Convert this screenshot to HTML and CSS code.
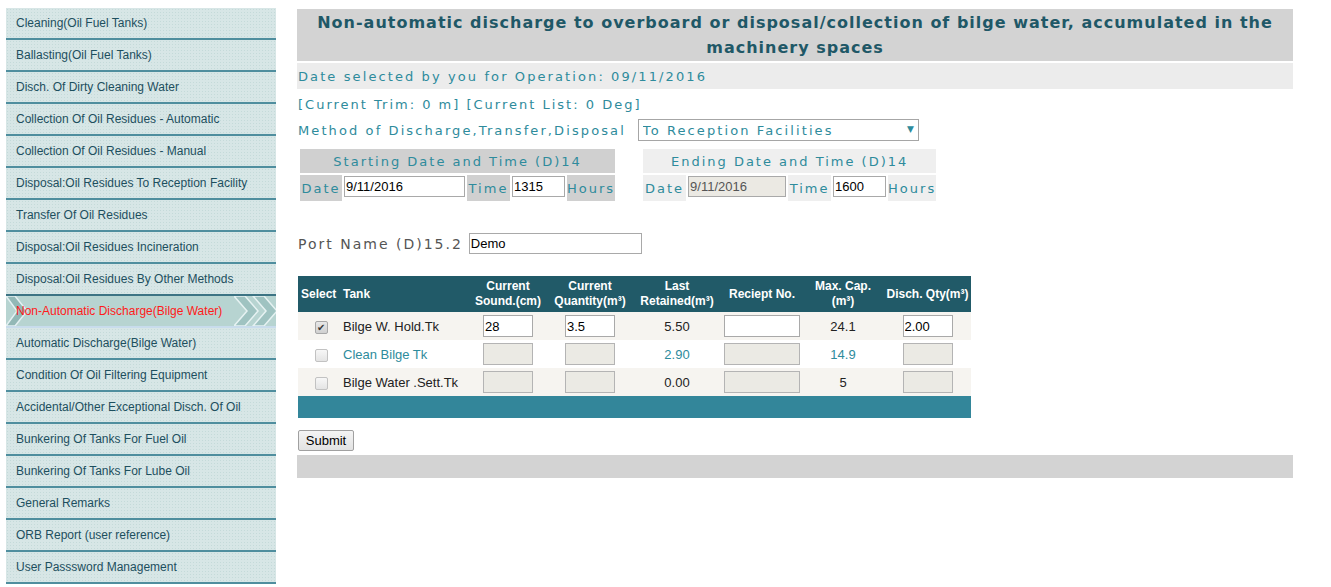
FILE: index.html
```html
<!DOCTYPE html>
<html>
<head>
<meta charset="utf-8">
<title>Non-automatic discharge</title>
<link rel="stylesheet" href="styles.css">
</head>
<body>
<div class="page">
  <nav class="sidebar">
    <a class="nav-item">Cleaning(Oil Fuel Tanks)</a>
    <a class="nav-item">Ballasting(Oil Fuel Tanks)</a>
    <a class="nav-item">Disch. Of Dirty Cleaning Water</a>
    <a class="nav-item">Collection Of Oil Residues - Automatic</a>
    <a class="nav-item">Collection Of Oil Residues - Manual</a>
    <a class="nav-item">Disposal:Oil Residues To Reception Facility</a>
    <a class="nav-item">Transfer Of Oil Residues</a>
    <a class="nav-item">Disposal:Oil Residues Incineration</a>
    <a class="nav-item pre-active">Disposal:Oil Residues By Other Methods</a>
    <a class="nav-item active">
      <svg class="chev chev-left" width="22" height="30" viewBox="0 0 22 30"><polygon points="0,0 9,0 21,15 9,30 0,30 11,15" fill="#92b8b6" stroke="#e4f0f2" stroke-width="1.5"/></svg>
      <span class="nav-label">Non-Automatic Discharge(Bilge Water)</span>
      <svg class="chev chev-right" width="42" height="30" viewBox="0 0 42 30"><polygon points="0,0 11,0 24,15 11,30 0,30 13,15" fill="#9fc3c1" stroke="#e6f2f2" stroke-width="1.5"/><polygon points="19,0 30,0 43,15 30,30 19,30 32,15" fill="#9fc3c1" stroke="#e6f2f2" stroke-width="1.5"/></svg>
    </a>
    <a class="nav-item">Automatic Discharge(Bilge Water)</a>
    <a class="nav-item">Condition Of Oil Filtering Equipment</a>
    <a class="nav-item">Accidental/Other Exceptional Disch. Of Oil</a>
    <a class="nav-item">Bunkering Of Tanks For Fuel Oil</a>
    <a class="nav-item">Bunkering Of Tanks For Lube Oil</a>
    <a class="nav-item">General Remarks</a>
    <a class="nav-item">ORB Report (user reference)</a>
    <a class="nav-item">User Passsword Management</a>
  </nav>

  <main class="main">
    <div class="title">Non-automatic discharge to overboard or disposal/collection of bilge water, accumulated in the machinery spaces</div>
    <div class="datebar">Date selected by you for Operation: 09/11/2016</div>
    <div class="line trim">[Current Trim: 0 m] [Current List: 0 Deg]</div>
    <div class="line method">
      <span>Method of Discharge,Transfer,Disposal</span>
      <div class="select-wrap">
        <select class="select"><option>To Reception Facilities</option></select>
        <span class="select-arrow">&#9660;</span>
      </div>
    </div>

    <div class="dt-row">
      <table class="dt dt-start">
        <tr><th colspan="5">Starting Date and Time (D)14</th></tr>
        <tr>
          <td class="lbl w-date">Date</td>
          <td class="inp"><input class="field w121" value="9/11/2016"></td>
          <td class="lbl w-time">Time</td>
          <td class="inp"><input class="field w53" value="1315"></td>
          <td class="lbl w-hours">Hours</td>
        </tr>
      </table>
      <table class="dt dt-end">
        <tr><th colspan="5">Ending Date and Time (D)14</th></tr>
        <tr>
          <td class="lbl w-date2">Date</td>
          <td class="inp"><input class="field w98 disabled" value="9/11/2016" disabled></td>
          <td class="lbl w-time">Time</td>
          <td class="inp"><input class="field w53" value="1600"></td>
          <td class="lbl w-hours2">Hours</td>
        </tr>
      </table>
    </div>

    <div class="port">
      <span>Port Name (D)15.2</span>
      <input class="field port-input" value="Demo">
    </div>

    <table class="tanks">
      <colgroup>
        <col class="c-sel"><col class="c-tank"><col class="c-sound"><col class="c-qty"><col class="c-last"><col class="c-rec"><col class="c-max"><col class="c-disch">
      </colgroup>
      <thead>
        <tr>
          <th class="left">Select</th>
          <th class="left">Tank</th>
          <th>Current<br>Sound.(cm)</th>
          <th>Current<br>Quantity(m³)</th>
          <th>Last<br>Retained(m³)</th>
          <th>Reciept No.</th>
          <th>Max. Cap.<br>(m³)</th>
          <th>Disch. Qty(m³)</th>
        </tr>
      </thead>
      <tbody>
        <tr class="odd">
          <td class="center"><span class="cb checked">&#10004;</span></td>
          <td>Bilge W. Hold.Tk</td>
          <td class="center"><input class="cell-input w50" value="28"></td>
          <td class="center"><input class="cell-input w50" value="3.5"></td>
          <td class="center">5.50</td>
          <td class="center"><input class="cell-input w76" value=""></td>
          <td class="center">24.1</td>
          <td class="center"><input class="cell-input w50" value="2.00"></td>
        </tr>
        <tr class="even teal">
          <td class="center"><span class="cb"></span></td>
          <td>Clean Bilge Tk</td>
          <td class="center"><input class="cell-input w50 disabled" disabled></td>
          <td class="center"><input class="cell-input w50 disabled" disabled></td>
          <td class="center">2.90</td>
          <td class="center"><input class="cell-input w76 disabled" disabled></td>
          <td class="center">14.9</td>
          <td class="center"><input class="cell-input w50 disabled" disabled></td>
        </tr>
        <tr class="odd">
          <td class="center"><span class="cb"></span></td>
          <td>Bilge Water .Sett.Tk</td>
          <td class="center"><input class="cell-input w50 disabled" disabled></td>
          <td class="center"><input class="cell-input w50 disabled" disabled></td>
          <td class="center">0.00</td>
          <td class="center"><input class="cell-input w76 disabled" disabled></td>
          <td class="center">5</td>
          <td class="center"><input class="cell-input w50 disabled" disabled></td>
        </tr>
      </tbody>
      <tfoot>
        <tr><td colspan="8" class="foot"></td></tr>
      </tfoot>
    </table>

    <button class="submit">Submit</button>
    <div class="bottombar"></div>
  </main>
</div>
</body>
</html>
```

FILE: styles.css
```css
html, body {
  margin: 0;
  padding: 0;
  background: #ffffff;
}

.page {
  display: flex;
  align-items: flex-start;
  gap: 21px;
  padding: 8px 0 0 6px;
  font-family: "Liberation Sans", Arial, sans-serif;
}

/* Sidebar */
.sidebar {
  width: 270px;
  display: flex;
  flex-direction: column;
  flex: none;
}

.nav-item {
  position: relative;
  display: flex;
  align-items: center;
  height: 30px;
  padding-left: 10px;
  border-bottom: 2px solid #4f8e9e;
  background-color: #d7e6e6;
  background-image:
    radial-gradient(circle, rgba(180,208,207,0.55) 0.6px, transparent 0.8px);
  background-size: 3px 3px;
  color: #1d4f5e;
  font-size: 12px;
  text-decoration: none;
  white-space: nowrap;
}

.nav-item.pre-active {
  border-bottom-color: #3d7484;
}

.nav-item.active {
  height: 30px;
  border-bottom: 2px solid #c8dcec;
  background-color: #b7d4d1;
  background-image: none;
  color: #ff1a1a;
}

.nav-label {
  position: relative;
}

.chev {
  position: absolute;
  top: 0;
}

.chev-left {
  left: 0;
}

.chev-right {
  right: 0;
}

/* Main */
.main {
  width: 996px;
  margin-top: 1px;
  flex: none;
}

.title {
  background: #d3d3d3;
  color: #1f5867;
  font-family: "DejaVu Sans", Verdana, sans-serif;
  font-weight: bold;
  font-size: 16px;
  letter-spacing: 1px;
  line-height: 25px;
  text-align: center;
  padding: 1px 10px 1px;
}

.datebar {
  margin-top: 2px;
  height: 26px;
  line-height: 27px;
  background: #ececec;
  color: #2e8b9c;
  font-family: "DejaVu Sans", Verdana, sans-serif;
  font-size: 13px;
  letter-spacing: 2.1px;
  padding-left: 1px;
}

.line {
  color: #2e8b9c;
  font-family: "DejaVu Sans", Verdana, sans-serif;
  font-size: 13px;
  letter-spacing: 2px;
  padding-left: 1px;
}

.trim {
  margin-top: 6px;
  line-height: 20px;
}

.method {
  margin-top: 4px;
  display: flex;
  align-items: center;
  gap: 12px;
  height: 22px;
  letter-spacing: 2.1px;
}

.select-wrap {
  position: relative;
  width: 281px;
  height: 22px;
}

.select {
  appearance: none;
  -webkit-appearance: none;
  width: 281px;
  height: 22px;
  box-sizing: border-box;
  border: 1px solid #a6a6a6;
  background: #ffffff;
  color: #2e8b9c;
  font-family: "DejaVu Sans", Verdana, sans-serif;
  font-size: 13px;
  letter-spacing: 2.1px;
  padding: 0 0 0 4px;
  margin: 0;
  border-radius: 0;
}

.select-arrow {
  position: absolute;
  right: 5px;
  top: 5px;
  font-size: 9px;
  color: #2e8b9c;
  letter-spacing: 0;
  pointer-events: none;
}

/* Date tables */
.dt-row {
  margin-top: 6px;
  display: flex;
  align-items: flex-start;
  gap: 24px;
  margin-left: 1px;
}

.dt {
  border-spacing: 2px;
  font-family: "DejaVu Sans", Verdana, sans-serif;
  font-size: 13px;
  letter-spacing: 2px;
  color: #2e8b9c;
}

.dt th {
  font-weight: normal;
  height: 24px;
  padding: 0;
  text-align: center;
}

.dt .lbl {
  height: 26px;
  padding: 0;
  text-align: center;
  white-space: nowrap;
}

.dt .inp {
  padding: 0;
  vertical-align: top;
  padding-top: 1px;
}

.dt-start th,
.dt-start .lbl {
  background: #d0d0d0;
}

.dt-end th,
.dt-end .lbl {
  background: #efefef;
}

.w-date { width: 42px; }
.w-date2 { width: 43px; }
.w-time { width: 43px; }
.w-hours { width: 48px; }
.w-hours2 { width: 47px; }

.field {
  box-sizing: border-box;
  height: 21px;
  border: 1px solid #a9a9a9;
  background: #ffffff;
  color: #000;
  font-family: "Liberation Sans", Arial, sans-serif;
  font-size: 13px;
  letter-spacing: 0;
  padding: 0 1px;
  margin: 0;
  display: block;
}

.field.disabled {
  background: #ebe9e3;
  color: #555;
}

.w121 { width: 121px; }
.w98 { width: 98px; }
.w53 { width: 53px; }

/* Port */
.port {
  margin-top: 30px;
  display: flex;
  align-items: center;
  gap: 6px;
  padding-left: 1px;
  color: #555555;
  font-family: "DejaVu Sans", Verdana, sans-serif;
  font-size: 14px;
  letter-spacing: 2px;
}

.port-input {
  width: 173px;
}

/* Tanks table */
.tanks {
  margin-top: 22px;
  margin-left: 1px;
  width: 673px;
  table-layout: fixed;
  border-collapse: collapse;
  font-family: "Liberation Sans", Arial, sans-serif;
  font-size: 13px;
  color: #222;
}

.c-sel { width: 42px; }
.c-tank { width: 128px; }
.c-sound { width: 80px; }
.c-qty { width: 84px; }
.c-last { width: 90px; }
.c-rec { width: 80px; }
.c-max { width: 82px; }
.c-disch { width: 87px; }

.tanks thead th {
  background: #215a68;
  color: #ffffff;
  font-size: 12px;
  font-weight: bold;
  line-height: 15px;
  height: 36px;
  padding: 0;
  text-align: center;
  white-space: nowrap;
}

.tanks thead th.left {
  text-align: left;
  padding-left: 3px;
}

.tanks tbody td {
  height: 28px;
  padding: 0;
  box-sizing: border-box;
}

.tanks tbody td:nth-child(2) {
  padding-left: 3px;
}

.tanks tr.odd td {
  background: #f6f4f0;
}

.tanks tr.even td {
  background: #ffffff;
}

.tanks tr.teal td {
  color: #2e8b9c;
}

.center {
  text-align: center;
}

.cell-input {
  box-sizing: border-box;
  height: 22px;
  border: 1px solid #a9a9a9;
  background: #ffffff;
  font-family: "Liberation Sans", Arial, sans-serif;
  font-size: 13px;
  color: #000;
  padding: 0 1px;
  margin: 0;
  vertical-align: middle;
}

.cell-input.disabled {
  background: #ebeae4;
  border-color: #b4b4b4;
}

.w50 { width: 50px; }
.w76 { width: 76px; }

.cb {
  display: inline-block;
  width: 11px;
  height: 11px;
  border: 1px solid #c2c2c2;
  border-radius: 2px;
  background: linear-gradient(#f7f7f7, #e4e4e4);
  vertical-align: middle;
  font-size: 10px;
  line-height: 11px;
  text-align: center;
  color: #3a3a3a;
  margin-left: 4px;
}

.cb.checked {
  border-color: #a8a8a8;
  background: linear-gradient(#e8e8e8, #d0d0d0);
}

.tanks .foot {
  background: #33869a;
  height: 22px;
  padding: 0;
}

/* Submit + bar */
.submit {
  display: block;
  margin-top: 12px;
  margin-left: 1px;
  width: 56px;
  height: 21px;
  padding: 0;
  border: 1px solid #a0a0a0;
  border-radius: 2px;
  background: linear-gradient(#f4f4f4, #e2e2e2);
  font-family: "Liberation Sans", Arial, sans-serif;
  font-size: 13px;
  color: #000;
}

.bottombar {
  margin-top: 4px;
  height: 23px;
  background: #d3d3d3;
}
```
